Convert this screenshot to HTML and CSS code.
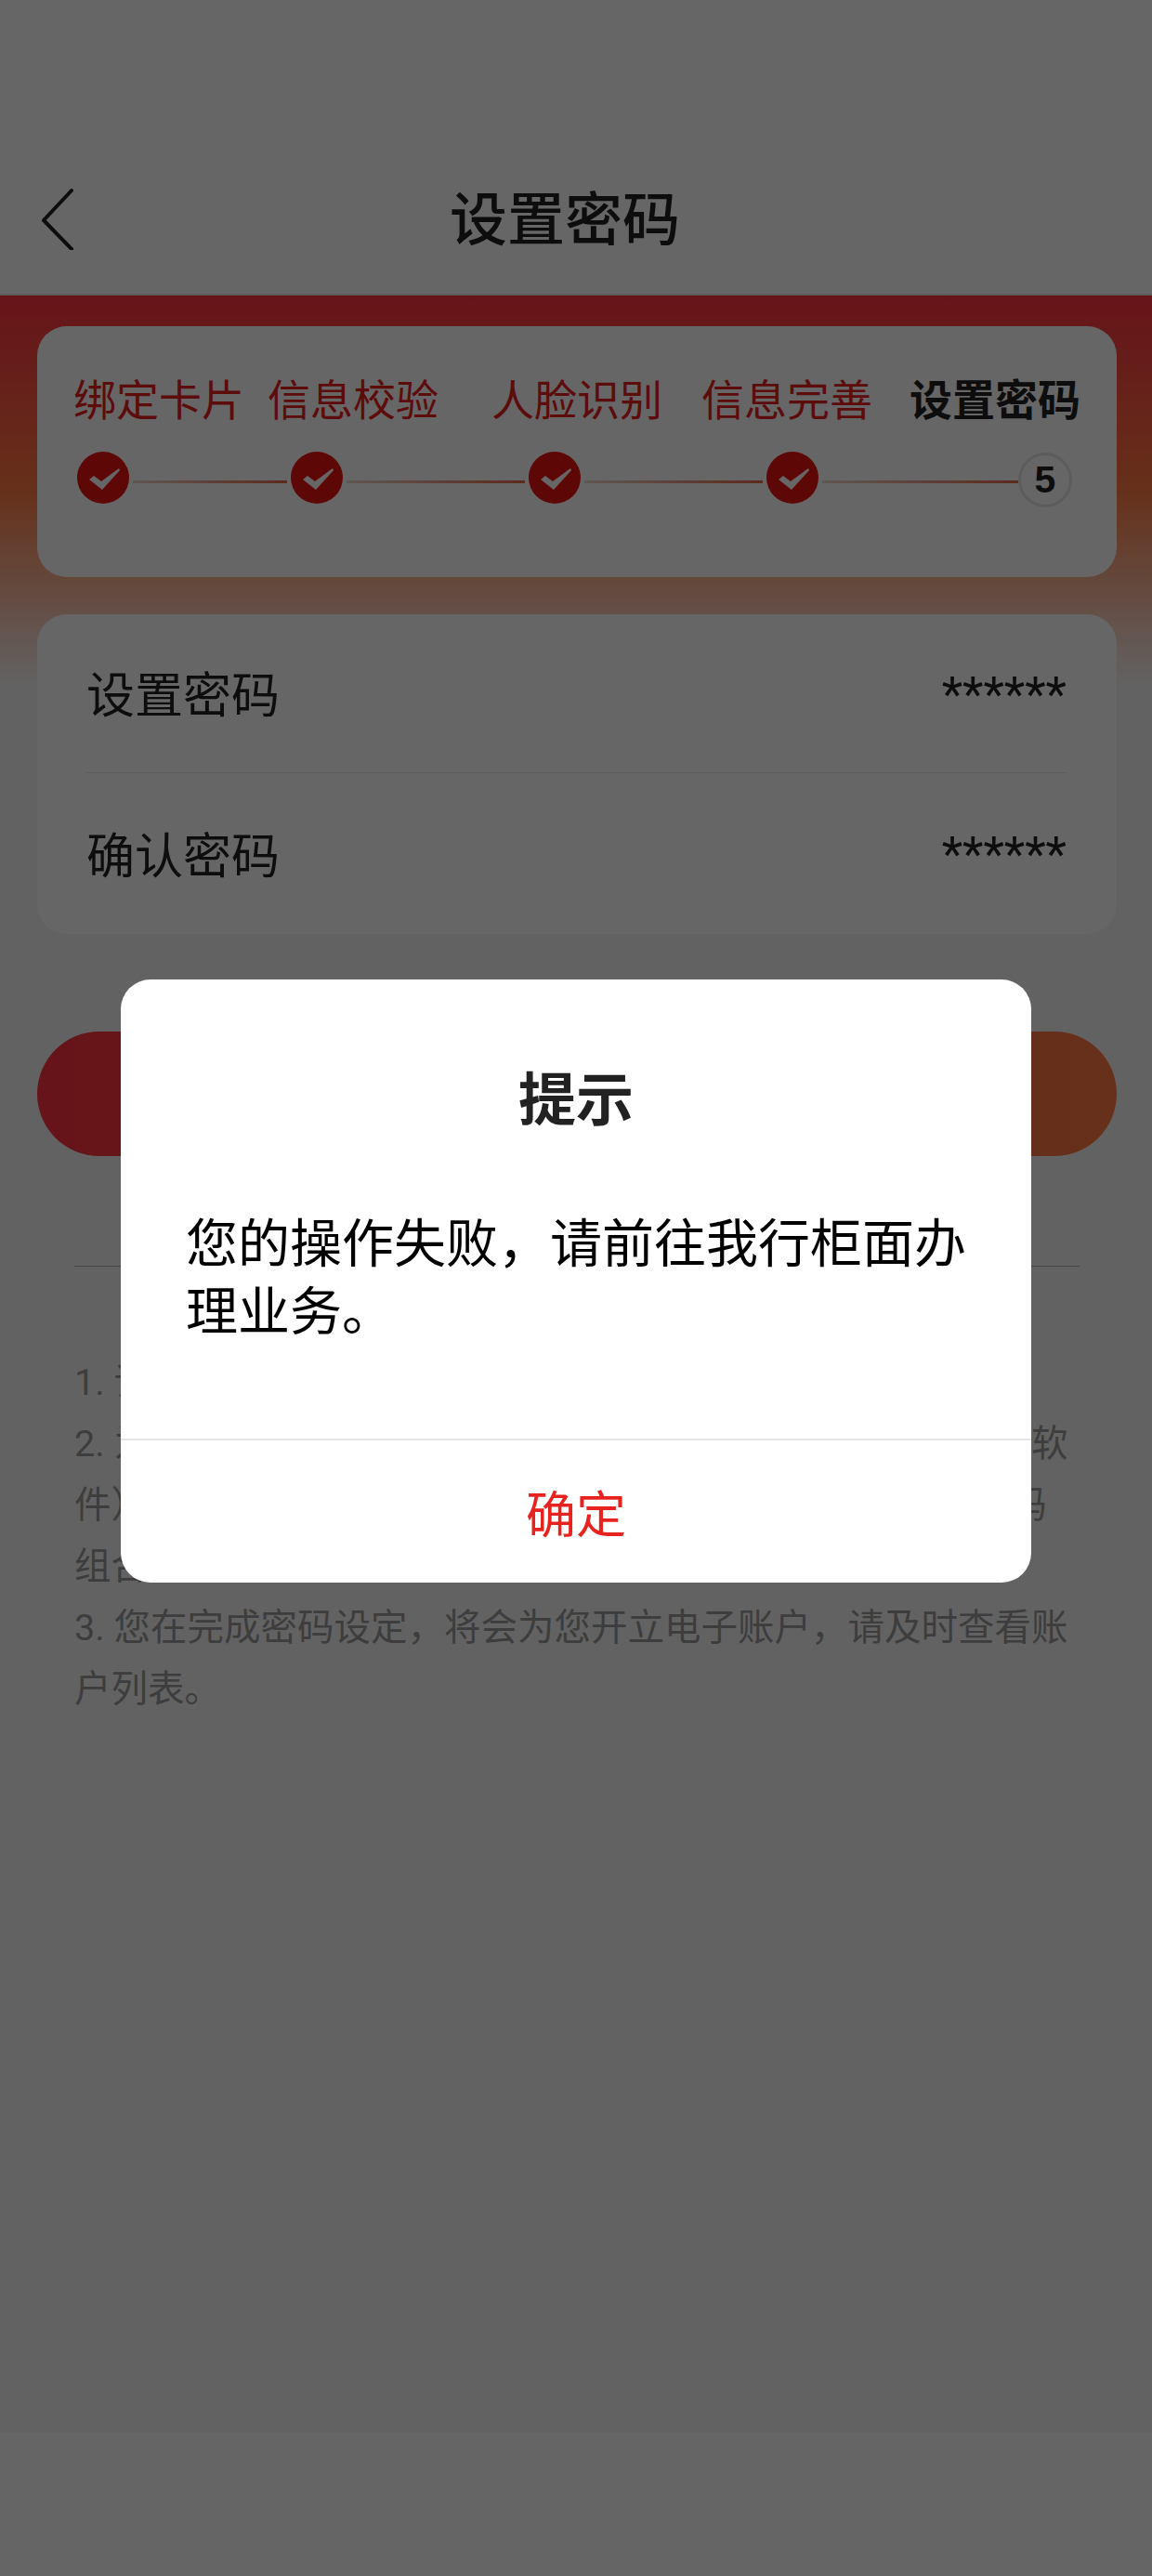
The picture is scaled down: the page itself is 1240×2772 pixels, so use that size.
FILE: index.html
```html
<!DOCTYPE html>
<html lang="zh-CN">
<head>
<meta charset="utf-8">
<title>设置密码</title>
<link rel="stylesheet" href="styles.css">
</head>
<body>
<div class="page">
  <header class="nav">
    <svg class="back" width="36" height="66" viewBox="0 0 36 66"><path d="M33 2 3 34l30 31" fill="none" stroke="#222" stroke-width="4" stroke-linecap="round" stroke-linejoin="round"/></svg>
    <h1 class="nav-title">设置密码</h1>
  </header>
  <main class="main">
    <section class="card steps">
      <div class="labels">
        <span class="label l1">绑定卡片</span>
        <span class="label l2">信息校验</span>
        <span class="label l3">人脸识别</span>
        <span class="label l4">信息完善</span>
        <span class="label l5 current">设置密码</span>
      </div>
      <div class="track">
        <span class="dot"><svg width="56" height="56" viewBox="0 0 56 56"><path d="M13 30 18 26 26 32 45 18 46 20 27 41z" fill="#fff"/></svg></span>
        <span class="line t1"></span>
        <span class="dot"><svg width="56" height="56" viewBox="0 0 56 56"><path d="M13 30 18 26 26 32 45 18 46 20 27 41z" fill="#fff"/></svg></span>
        <span class="line t2"></span>
        <span class="dot"><svg width="56" height="56" viewBox="0 0 56 56"><path d="M13 30 18 26 26 32 45 18 46 20 27 41z" fill="#fff"/></svg></span>
        <span class="line t3"></span>
        <span class="dot"><svg width="56" height="56" viewBox="0 0 56 56"><path d="M13 30 18 26 26 32 45 18 46 20 27 41z" fill="#fff"/></svg></span>
        <span class="line t4"></span>
        <span class="num">5</span>
      </div>
    </section>
    <section class="card fields">
      <div class="field"><span>设置密码</span><span class="stars">******</span></div>
      <div class="field"><span>确认密码</span><span class="stars">******</span></div>
    </section>
    <div class="submit"></div>
    <div class="rule"></div>
    <section class="notes">
      <p>1. 请您设置6位数字密码</p>
      <p>2. 为了保障您的账户资金安全，请勿在手机安装来历不明的软<br>件），请勿设置连续重复数字等简单密码，建议使用数字密码<br>组合。</p>
      <p>3. 您在完成密码设定，将会为您开立电子账户，请及时查看账户列表。</p>
    </section>
  </main>
  <div class="foot"></div>
</div>
<div class="mask">
  <div class="dialog">
    <h2 class="d-title">提示</h2>
    <p class="d-body">您的操作失败，请前往我行柜面办理业务。</p>
    <div class="d-action">确定</div>
  </div>
</div>
</body>
</html>
```
FILE: styles.css
```css
* { box-sizing: border-box; }
html, body { margin: 0; padding: 0; height: 2772px; overflow: hidden; }
body { font-family: Roboto, "Noto Sans CJK SC", sans-serif; background: #f6f6f6; position: relative; }
.page { height: 2772px; display: flex; flex-direction: column; }
.nav { height: 318px; background: #fff; display: flex; align-items: flex-end; position: relative; border-bottom: 2px solid #e8e8e8; padding: 0 0 44px 44px; }
.back { display: block; margin-bottom: 3px; }
.nav-title { margin: 0 0 0 404px; font-size: 62px; line-height: 68px; font-weight: 500; color: #222; }
.main { flex: 1; padding: 33px 38px 0 40px; background: linear-gradient(180deg, #ff3240 0, #ff7a42 210px, #f6f6f6 420px) no-repeat; background-size: 100% 420px; background-color: #f6f6f6; }
.card { background: #fff; border-radius: 32px; }
.steps { height: 270px; padding: 50px 0 0 39px; }
.labels { display: flex; height: 60px; align-items: center; }
.label { font-size: 46px; line-height: 60px; color: #e8201f; white-space: nowrap; }
.l2 { margin-left: 25px; }
.l3 { margin-left: 57px; }
.l4 { margin-left: 42px; }
.l5 { margin-left: 40px; }
.current { color: #222; font-weight: 700; }
.track { display: flex; align-items: flex-start; margin: 25px 0 0 4px; }
.dot { width: 56px; height: 56px; border-radius: 50%; background: #e8140f; flex: none; }
.dot svg { display: block; }
.line { height: 3px; margin: 31px 4px 0; flex: none; background: linear-gradient(90deg, #f0d8d0, #e86a48); }
.t1 { width: 166px; }
.t2 { width: 192px; }
.t3 { width: 192px; }
.t4 { width: 211px; margin-right: 0; }
.num { width: 58px; height: 59px; margin-top: 1px; border-radius: 50%; border: 3px solid #e6e6e6; background: #fff; font-size: 41px; font-weight: 700; color: #222; display: flex; align-items: center; justify-content: center; font-family: "Liberation Sans", sans-serif; }
.fields { margin-top: 40px; height: 344px; padding: 0 54px 0 53px; background: #fff; }
.field { height: 170px; display: flex; justify-content: space-between; align-items: center; font-size: 52px; color: #222; padding-bottom: 3px; }
.field + .field { height: 174px; border-top: 1px solid #e8e8e8; }
.stars { line-height: 1; padding-top: 6px; }
.submit { margin-top: 105px; height: 134px; border-radius: 67px; background: linear-gradient(90deg, #ff3240, #ff7a42); }
.rule { margin: 118px 40px 0 40px; height: 1px; background: #b0b0b0; }
.notes { margin: 92px 40px 0; font-size: 39.5px; line-height: 66px; color: #999; }
.notes p { margin: 0; }
.foot { height: 155px; background: #fdfdfd; }
.mask { position: absolute; inset: 0; background: rgba(0,0,0,.6); display: flex; align-items: center; justify-content: center; padding-bottom: 15px; }
.dialog { width: 980px; height: 649px; background: #fff; border-radius: 32px; display: flex; flex-direction: column; }
.d-title { margin: 0; padding-top: 96px; text-align: center; font-size: 62px; line-height: 70px; font-weight: 700; color: #222; }
.d-body { margin: 0; padding: 83px 60px 0 70px; font-size: 56px; line-height: 73px; color: #000; flex: 1; }
.d-action { height: 155px; border-top: 2px solid #e6e6e6; display: flex; align-items: center; justify-content: center; font-size: 54px; color: #e8231f; }
```
